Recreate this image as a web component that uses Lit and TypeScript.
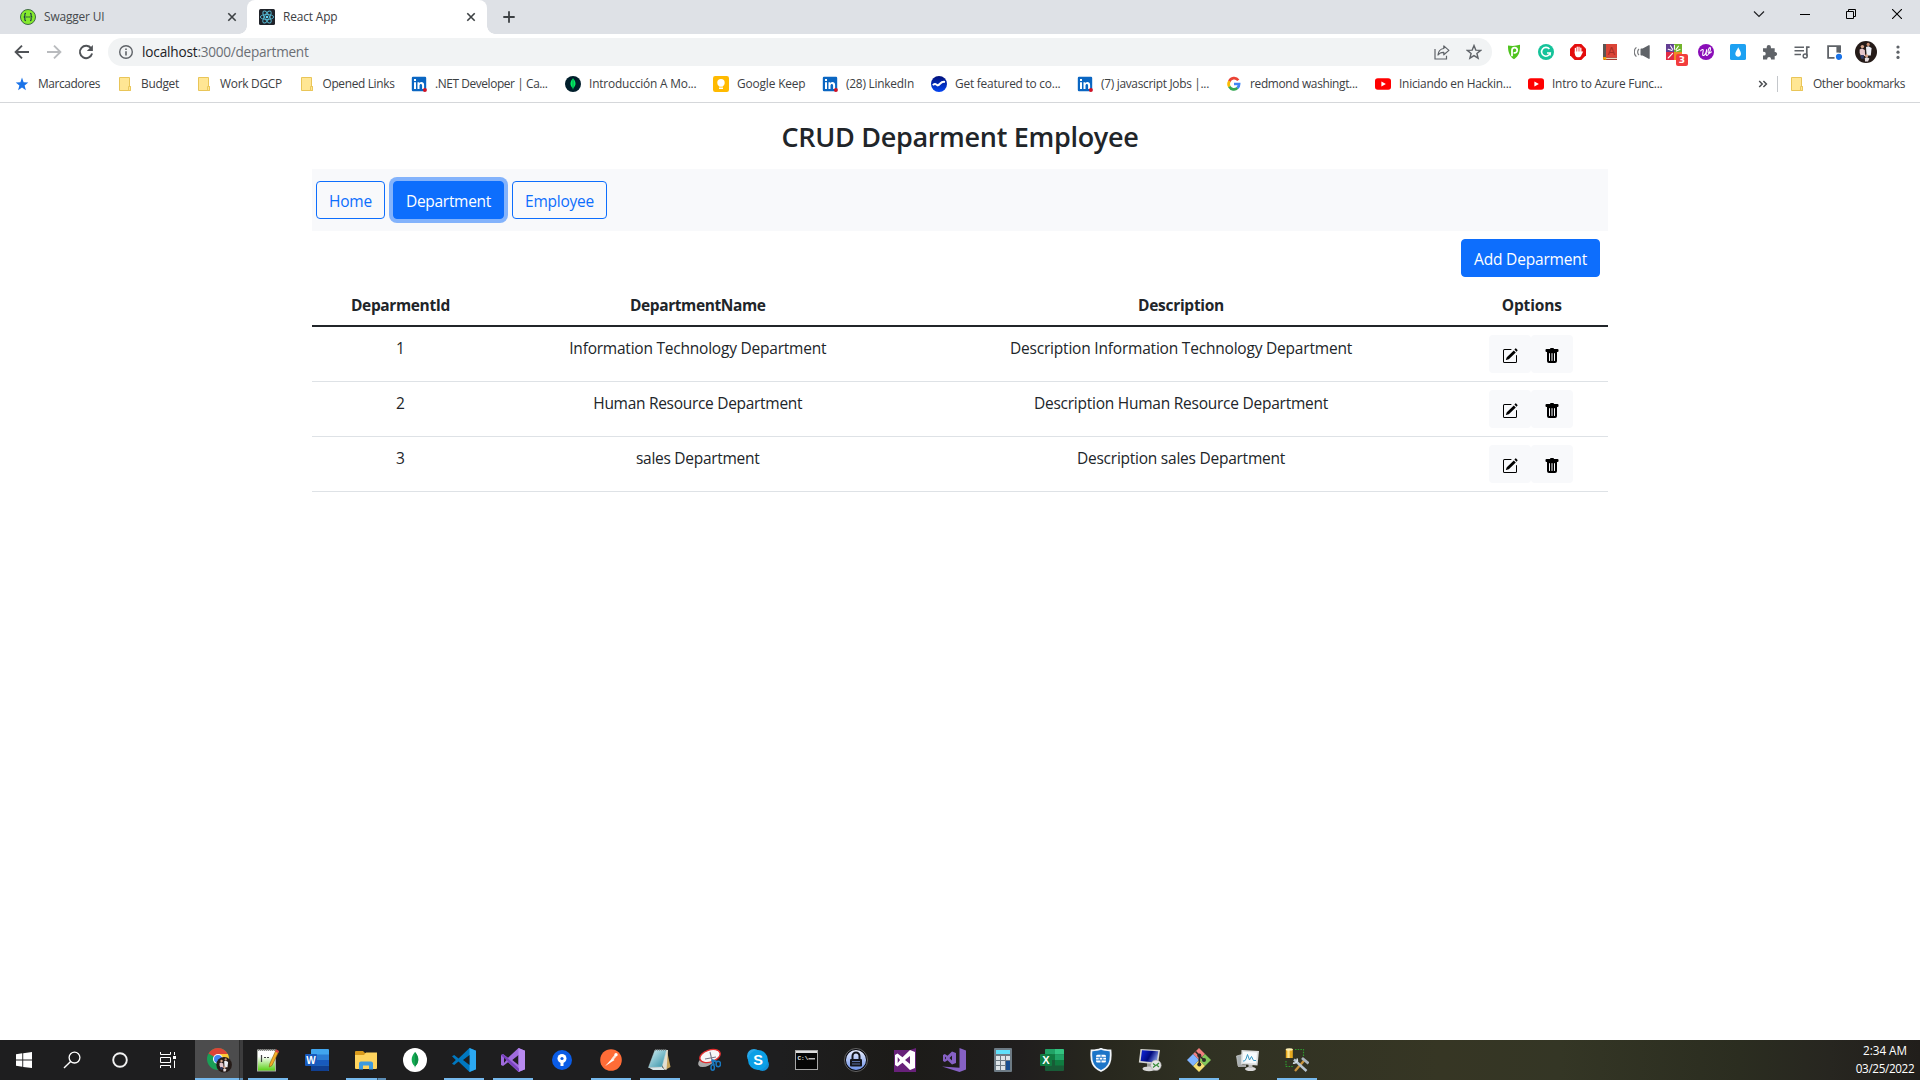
import { LitElement, html, css, svg } from "lit";
import { customElement, property } from "lit/decorators.js";

/** Single line of text whose tracking is adjusted so that it fills a given width. */
@customElement("text-run")
class TextRun extends LitElement {
  static styles = css`
    :host { display: inline-block; white-space: pre; flex: none; }
  `;
  @property() text = "";
  @property({ type: Number }) w = 0;
  render() {
    return html`<span>${this.text}</span>`;
  }
  updated() {
    const s = this.renderRoot.querySelector("span") as HTMLElement;
    s.style.letterSpacing = "0";
    const natural = s.getBoundingClientRect().width;
    const n = this.text.length;
    if (this.w && n) s.style.letterSpacing = ((this.w - natural) / n).toFixed(4) + "px";
    if (this.w) this.style.width = this.w + "px";
  }
}

const icon = (size: number, body: unknown, box = "0 0 16 16") =>
  html`<svg width=${size} height=${size} viewBox=${box}>${body}</svg>`;

const FONT = "Liberation Sans, sans-serif";

/* ---------- browser glyphs ---------- */
const swagger = icon(16, svg`
  <circle cx="8" cy="8" r="7.5" fill="#85ea2d" stroke="#3f6b45" stroke-width="1"/>
  <path d="M6 4.3C4.6 4.3 4.9 5.4 4.9 6.4C4.9 7.4 4.5 8 3.7 8C4.5 8 4.9 8.6 4.9 9.6C4.9 10.6 4.6 11.7 6 11.7M10 4.3C11.4 4.3 11.1 5.4 11.1 6.4C11.1 7.4 11.5 8 12.3 8C11.5 8 11.1 8.6 11.1 9.6C11.1 10.6 11.4 11.7 10 11.7" fill="none" stroke="#173647" stroke-width="1.1"/>
  <circle cx="6.1" cy="8" r=".65" fill="#173647"/><circle cx="8" cy="8" r=".65" fill="#173647"/><circle cx="9.9" cy="8" r=".65" fill="#173647"/>`);
const react = icon(16, svg`
  <rect width="16" height="16" rx="1.5" fill="#20232a"/>
  <g fill="none" stroke="#56b9d2" stroke-width=".9">
    <ellipse cx="8" cy="8" rx="6.7" ry="2.5"/><ellipse cx="8" cy="8" rx="6.7" ry="2.5" transform="rotate(60 8 8)"/><ellipse cx="8" cy="8" rx="6.7" ry="2.5" transform="rotate(120 8 8)"/>
  </g><circle cx="8" cy="8" r="1.3" fill="#61dafb"/>`);
const tabClose = icon(16, svg`<path d="M4.3 4.3L11.7 11.7M11.7 4.3L4.3 11.7" stroke="#3c4043" stroke-width="1.6"/>`);
const plus = icon(16, svg`<path d="M8 2.3V13.7M2.3 8H13.7" stroke="#3c4043" stroke-width="1.8"/>`);
const back = icon(16, svg`<path d="M15 8H2M8 1.6L1.6 8L8 14.4" fill="none" stroke="#505357" stroke-width="1.9"/>`);
const forward = icon(16, svg`<path d="M1 8H14M8 1.6L14.4 8L8 14.4" fill="none" stroke="#b9bbbe" stroke-width="1.9"/>`);
const reload = icon(16, svg`<path d="M13.2 4.4A6.2 6.2 0 1 0 14.1 9.6" fill="none" stroke="#505357" stroke-width="1.9"/><path d="M14.9 .9V7H8.8Z" fill="#505357"/>`);
const info = icon(16, svg`<circle cx="8" cy="8" r="6.3" fill="none" stroke="#5f6368" stroke-width="1.4"/><path d="M8 7.2V11.4M8 4.5V6" stroke="#5f6368" stroke-width="1.6"/>`);
const share = icon(16, svg`<path d="M1 5V15H12.5V11.8" fill="none" stroke="#5f6368" stroke-width="1.2"/><path d="M9.8 1.9L14.9 6.4L9.8 10.8V8.3C7 8.2 5.4 9 4 11C4.3 7.4 6.2 5 9.8 4.5Z" fill="none" stroke="#5f6368" stroke-width="1.2" stroke-linejoin="round"/>`);
const starOutline = icon(16, svg`<path d="M8 1.6L9.8 6.1L14.7 6.4L10.9 9.5L12.1 14.2L8 11.6L3.9 14.2L5.1 9.5L1.3 6.4L6.2 6.1Z" fill="none" stroke="#5f6368" stroke-width="1.4"/>`);
const starBlue = icon(16, svg`<path d="M8 1.6L9.6 6.2L14.3 6.4L10.6 9.4L11.9 14.2L8 11.5L4.1 14.2L5.4 9.4L1.7 6.4L6.4 6.2Z" fill="#1a73e8"/>`);
const folder = icon(16, svg`<path d="M2.5 1.5H12.5V10.5H13.5V14.5H2.5Z" fill="#ffe694" stroke="#e9c558" stroke-width="1"/><path d="M11.5 14.5V10.5H13.5V14.5Z" fill="#ffe694" stroke="#e9c558" stroke-width=".9"/>`);
const linkedin = icon(16, svg`<rect x=".8" y=".8" width="14.4" height="14.4" rx="1.2" fill="#0a66c2"/>
  <path d="M3 6.2H5V13H3ZM3 3H5V5H3ZM6.5 6.2H8.4V7.2C9.5 5.5 13.1 5.6 13.1 9V13H11.1V9.5C11.1 7.4 8.5 7.4 8.5 9.5V13H6.5Z" fill="#fff"/><circle cx="13.9" cy="14" r="2" fill="#d11124"/>`);
const mongo = icon(16, svg`<circle cx="8" cy="8" r="8" fill="#001e2b"/><path d="M8 2.2C11.7 6 11 9.8 8.3 12L8 14L7.7 12C5 9.8 4.4 6 8 2.2Z" fill="#00ed64"/><path d="M8 3V12.5" stroke="#00a34a" stroke-width="1"/>`);
const keep = icon(16, svg`<rect width="16" height="16" rx="2.2" fill="#ffba00"/><circle cx="8" cy="6.8" r="3.7" fill="#fff"/><path d="M6 9H10V10.6H6ZM6 11.6H10V13H6Z" fill="#fff"/>`);
const wave = icon(16, svg`<defs><linearGradient id="w" x2="0" y2="1"><stop stop-color="#000f7a"/><stop offset="1" stop-color="#0546f2"/></linearGradient></defs><circle cx="8" cy="8" r="8" fill="url(#w)"/><path d="M2 9.3C3.4 6.7 5.4 8.5 6.8 9.4C8.8 8.9 9.8 5 14 6" fill="none" stroke="#fff" stroke-width="2"/>`);
const google = icon(16, svg`<g fill="none" stroke-width="2.7"><path d="M12.3 4.2A5.2 5.2 0 0 0 3.3 5.4" stroke="#ea4335"/><path d="M3.4 5.2A5.3 5.3 0 0 0 3.4 10.8" stroke="#fbbc05"/><path d="M3.3 10.6A5.2 5.2 0 0 0 11.5 11.9" stroke="#34a853"/><path d="M8 8H13.1C13.1 9.7 12.5 11 11.4 12" stroke="#4285f4"/></g>`);
const youtube = icon(16, svg`<rect x="0" y="2.2" width="16" height="11.6" rx="2.8" fill="#f00"/><path d="M6.4 5.4L10.9 8L6.4 10.6Z" fill="#fff"/>`);

/* ---------- extension icons ---------- */
const privacy = icon(16, svg`<path d="M2 1.5C6 2.2 10 2 14 .8C14.3 8 12.6 12.6 8 15.2C3.8 12.6 1.8 8 2 1.5Z" fill="#4fc41f"/><path d="M6 12.3V6.3A2.6 2.6 0 1 1 8.6 8.9H7.6" fill="none" stroke="#fff" stroke-width="1.8"/>`);
const grammarly = icon(16, svg`<circle cx="8" cy="8" r="8" fill="#15c39a"/><path d="M11.4 5A4.4 4.4 0 1 0 12.2 9H9" fill="none" stroke="#fff" stroke-width="1.6"/><path d="M12.2 8.7V11.6" stroke="#fff" stroke-width="1.3"/>`);
const adblock = icon(16, svg`<path d="M4.7 0H11.3L16 4.7V11.3L11.3 16H4.7L0 11.3V4.7Z" fill="#e40d0d"/><path d="M5.4 4.4V9M7.2 3.2V8M9 3.2V8M10.8 4.2V9" stroke="#fff" stroke-width="1.3" stroke-linecap="round"/><path d="M4.8 7.4H11.4L13.2 7.5L11.2 11.5C10.5 13 9.7 13.3 8.3 13.3C5.6 13.3 4.8 11 4.8 9Z" fill="#fff"/>`);
const book = icon(16, svg`<path d="M1.5 0H15V13.5H3C1.5 13.5 1 14 1 14.6Z" fill="#db4437"/><path d="M1 1V14.8C1.3 15.6 2 16 3 16H15V13.3H3L1.7 14" fill="#a83a30"/><path d="M1 0H4V13H1Z" fill="#5b5552"/><path d="M3 14H15V15H3Z" fill="#ead9c5"/><path d="M1.2 13.2V16L2.8 15.3L4.2 16V13.2Z" fill="#f4b400"/><text x="9.3" y="11" font-size="11" font-family=${FONT} text-anchor="middle" fill="#a82e25">A</text>`);
const speaker = icon(16, svg`<path d="M7.2 5.2H9L15 1.8V14.2L9 10.8H7.2Z" fill="#5f6368" stroke="#5f6368" stroke-width="1.4" stroke-linejoin="round"/><path d="M5 5A4 4 0 0 0 5 11M2.4 3.4A6 6 0 0 0 2.4 12.6" fill="none" stroke="#77797c" stroke-width="1.2"/>`);
const patch = html`<div class="badged">${icon(16, svg`<rect width="8" height="8" fill="#633f93"/><rect x="8" width="8" height="8" fill="#72b42c"/><rect y="8" width="8" height="8" fill="#e22a45"/><rect x="8" y="8" width="8" height="8" fill="#f08a24"/><path d="M6.6 9.4L2.2 14M6 6.6L2.2 5.2M6.6 5.3L4.5 1.8M8.4 5.2V1.2M10 5.6L12.4 2.2M10.4 7L14 5.6" stroke="#fff" stroke-width="1.1" stroke-linecap="round"/>`)}<span class="badge">3</span></div>`;
const wiki = icon(16, svg`<circle cx="8" cy="8" r="8" fill="#8a0db8"/><path d="M2.4 7.2C3.4 5.4 5.6 4.6 5.2 6.8C4.5 10 4.3 12.2 6 11.4C7.6 10.4 8.4 7.6 8.7 5.4C8.2 8.6 7.6 12 9.2 11.4C11.2 10.2 13.2 5 12.2 3.6C11 3 10 6.6 10 8.2C10.6 10 12.4 9 13.8 7.6" fill="none" stroke="#fff" stroke-width="1.1"/>`);
const drop = icon(16, svg`<rect width="16" height="16" rx="1.6" fill="#1da1f2"/><path d="M8.2 3.2C9.2 5.4 11 7.5 11 9.8C11 13.7 5.3 13.7 5.3 9.8C5.3 7.5 7.5 5.4 8.2 3.2Z" fill="#fff"/>`);
const puzzle = icon(16, svg`<path d="M1 4.2H4.7V3A2.1 2.1 0 0 1 8.9 3V4.2H12.7V8H13.5A2.1 2.1 0 0 1 13.5 12.1H12.7V15.5H9V14.8A1.9 1.9 0 0 0 5.2 14.8V15.5H1V11.5H1.9A1.8 1.8 0 0 0 1.9 7.8H1Z" fill="#5f6368"/>`);
const media = icon(16, svg`<path d="M.5 3.2H10M.5 6.8H10M.5 10.4H7" stroke="#5f6368" stroke-width="1.5"/><path d="M15.6 3.1H12.8V11.8" fill="none" stroke="#5f6368" stroke-width="1.7"/><circle cx="11.2" cy="12" r="2" fill="none" stroke="#5f6368" stroke-width="1.5"/>`);
const panel = icon(16, svg`<path d="M8.5 13.9H2.1V2.1H14V8.6" fill="none" stroke="#5f6368" stroke-width="1.8"/><path d="M10.4 2H14.9V8.6H10.4Z" fill="#5f6368"/><circle cx="13" cy="12.8" r="3.1" fill="#1a73e8"/>`);
const portrait = svg`<circle cx="11" cy="11" r="11" fill="#251b18"/><circle cx="7.4" cy="5.6" r="1.7" fill="#d8a58b"/><circle cx="13.2" cy="3.4" r="1.6" fill="#c98f72"/><path d="M4.6 8.6L7 7.6L9.8 9L10.2 15H6L4.6 12Z" fill="#e5c6cc"/><path d="M11 6L13.5 5.2L16.6 7L15.8 14.5H11.6Z" fill="#eceef5"/><path d="M5.5 14H9L8.5 18L6 17.5Z" fill="#333c66"/><circle cx="11.6" cy="14.8" r="1.6" fill="#d9a288"/><path d="M9.8 17L12 16.2L14.4 17.5L13 20.5H10Z" fill="#e6dce0"/>`;
const avatar = icon(22, portrait, "0 0 22 22");
const dots = icon(16, svg`<circle cx="8" cy="3" r="1.6" fill="#5f6368"/><circle cx="8" cy="8.2" r="1.6" fill="#5f6368"/><circle cx="8" cy="13.4" r="1.6" fill="#5f6368"/>`);

/* ---------- window controls ---------- */
const winDown = icon(12, svg`<path d="M1 3.5L6 8.5L11 3.5" fill="none" stroke="#202124" stroke-width="1.2"/>`, "0 0 12 12");
const winMin = icon(10, svg`<path d="M0 5.5H10" stroke="#000"/>`, "0 0 10 10");
const winMax = icon(10, svg`<path d="M.5 2.5H7.5V9.5H.5ZM2.5 2.5V.5H9.5V7.5H7.5" fill="none" stroke="#000"/>`, "0 0 10 10");
const winClose = icon(10, svg`<path d="M0 0L10 10M10 0L0 10" stroke="#000" stroke-width="1.1"/>`, "0 0 10 10");

/* ---------- page icons ---------- */
const pencil = icon(16, svg`<path d="M15.5 1.9a.5.5 0 0 1 0 .7l-1 1.1-2.1-2.1 1-1.1a.5.5 0 0 1 .7 0zM13.8 4.4l-2-2-7 6.8a.5.5 0 0 0-.1.2l-.8 2.4a.25.25 0 0 0 .3.3l2.4-.8a.5.5 0 0 0 .2-.1z"/><path fill-rule="evenodd" d="M1 13.5A1.5 1.5 0 0 0 2.5 15h11a1.5 1.5 0 0 0 1.5-1.5v-6a.5.5 0 0 0-1 0v6a.5.5 0 0 1-.5.5h-11a.5.5 0 0 1-.5-.5v-11a.5.5 0 0 1 .5-.5H9a.5.5 0 0 0 0-1H2.5A1.5 1.5 0 0 0 1 2.5z"/>`);
const trash = icon(16, svg`<path d="M2.5 1a1 1 0 0 0-1 1v1a1 1 0 0 0 1 1H3v9a2 2 0 0 0 2 2h6a2 2 0 0 0 2-2V4h.5a1 1 0 0 0 1-1V2a1 1 0 0 0-1-1H10a1 1 0 0 0-1-1H7a1 1 0 0 0-1 1zm3 4a.5.5 0 0 1 .5.5v7a.5.5 0 0 1-1 0v-7a.5.5 0 0 1 .5-.5zM8 5a.5.5 0 0 1 .5.5v7a.5.5 0 0 1-1 0v-7A.5.5 0 0 1 8 5zm3 .5v7a.5.5 0 0 1-1 0v-7a.5.5 0 0 1 1 0z"/>`);

/* ---------- taskbar icons, drawn on a 24px grid ---------- */
const t = (body: unknown) => icon(24, body, "0 0 24 24");
const windows = t(svg`<path d="M4 6.3L10.3 5.3V11.6H4ZM11.2 5.2L20 4V11.6H11.2ZM4 12.4H10.3V18.8L4 17.8ZM11.2 12.4H20V20L11.2 18.9Z" fill="#fff"/>`);
const search = t(svg`<circle cx="14.5" cy="9.6" r="5.4" fill="none" stroke="#fff" stroke-width="1.3"/><path d="M10.6 13.5L4 20" stroke="#fff" stroke-width="1.4"/>`);
const cortana = t(svg`<circle cx="12" cy="12" r="6.8" fill="none" stroke="#f2f2f2" stroke-width="1.9"/>`);
const taskview = t(svg`<path d="M4.5 4V6.5H14.5V4M4.5 20V17.5H14.5V20M4.5 9.5H14.5V14.5H4.5ZM18.5 4V7M18.5 12.5V20" fill="none" stroke="#fff"/><rect x="17" y="8" width="3" height="3" fill="#fff"/>`);
const chrome = icon(26, svg`<circle cx="12" cy="12" r="11" fill="#1a9f56"/><path d="M12 12L2.5 6.5A11 11 0 0 1 21.5 6.5L22 8H12Z" fill="#dd4437"/><path d="M12 7H21.9A11 11 0 0 1 12 23L16.5 14.5Z" fill="#fdc935"/><circle cx="12" cy="12" r="5" fill="#fff"/><circle cx="12" cy="12" r="4" fill="#4285f4"/><g transform="translate(10.3 10) scale(.71)">${portrait}</g>`, "0 0 26 26");
const npp = t(svg`<defs><linearGradient id="np" x2="0" y2="1"><stop offset=".3" stop-color="#fff"/><stop offset="1" stop-color="#55cf0f"/></linearGradient></defs><rect x="1.5" y="2" width="18" height="21" fill="url(#np)" stroke="#a8aba4"/><path d="M2 2H19" stroke="#888" stroke-dasharray="1 1" stroke-width="2"/><path d="M5.5 7V14M8 9.5H10M11 9.5H13" stroke="#444" stroke-width="1.2"/><path d="M20 2L22.7 3.7L16 17.5L13.3 19L13.7 16Z" fill="#f3ad26" stroke="#8a5a10" stroke-width=".6"/><path d="M20.2 1.2L23 3L22 5L19.3 3.4Z" fill="#d44"/>`);
const word = t(svg`<rect x="6" y="1" width="18" height="22" rx="1" fill="#41a5ee"/><path d="M6 6.5H24V12H6Z" fill="#2b7cd3"/><path d="M6 12H24V17.5H6Z" fill="#185abd"/><path d="M6 17.5H24V22A1 1 0 0 1 23 23H6Z" fill="#103f91"/><rect y="6" width="12" height="12" rx="1" fill="#185abd"/><text x="6" y="15.7" font-size="10" font-weight="700" font-family=${FONT} text-anchor="middle" fill="#fff">W</text>`);
const explorer = t(svg`<path d="M1 4A1 1 0 0 1 2 3H9L11 5H23V20H1Z" fill="#d99a1b"/><path d="M1 7H10L12 4.5H23V20A1 1 0 0 1 22 21H2A1 1 0 0 1 1 20Z" fill="#ffd45e"/><path d="M5 21.5V15A2 2 0 0 1 7 13.5H17A2 2 0 0 1 19 15V21.5H15V17.5H9V21.5Z" fill="#3e9ae0"/>`);
const compass = t(svg`<circle cx="12" cy="12" r="12" fill="#fff"/><path d="M12 4C16.7 9 16 15 12.4 18L12 20L11.6 18C8 15 7.3 9 12 4Z" fill="#13aa52"/><path d="M12 4C16.7 9 16 15 12 18.5Z" fill="#0e8f45"/>`);
const vscode = t(svg`<path d="M17.5 0L24 2.7V21.3L17.5 24L6.5 13.5L2.2 17L0 15.8L3.8 12L0 8.2L2.2 7L6.5 10.5Z" fill="#0078c0"/><path d="M17.5 0L24 2.7V21.3L17.5 24Z" fill="#2ba8f2"/><path d="M17.5 7V17L11 12Z" fill="#1e1e1e"/>`);
const vs = t(svg`<path d="M17.5 0L24 2.8V21.2L17.5 24L7 14.2L2 18L0 17V7L2 6L7 9.8ZM3 9V15L5.5 12ZM17.5 7L11.3 12L17.5 17Z" fill="#9f6bdd" fill-rule="evenodd"/><path d="M17.5 0L24 2.8V21.2L17.5 24Z" fill="#b88af0"/><path d="M2 6L18 20.5V24L0 7.2Z" fill="#7038b8" opacity=".8"/>`);
const sourcetree = t(svg`<circle cx="12" cy="12" r="10" fill="#0a5ce6"/><circle cx="12" cy="10.5" r="4.5" fill="#fff"/><circle cx="12" cy="10.5" r="1.6" fill="#0a5ce6"/><rect x="10.5" y="13" width="3" height="5" fill="#fff"/>`);
const postman = t(svg`<circle cx="12" cy="12" r="10.8" fill="#ff6c37"/><path d="M6 18.2L13.5 10L15.5 12Z" fill="#fff"/><path d="M12.5 10.5L15.5 7L17.2 8.8L14 12.3Z" fill="#ffe5da"/><circle cx="17" cy="6.8" r="1.7" fill="#fff"/>`);
const notepad = t(svg`<defs><linearGradient id="nt" x2="1" y2="1"><stop stop-color="#d4f0f4"/><stop offset="1" stop-color="#2c8ca3"/></linearGradient></defs><path d="M19 3L22.5 19L17 22Z" fill="#c6a35a"/><path d="M7 2H20L18.5 22L16 21Z" fill="#e4dfd0"/><path d="M7 2H18.5L14 19L.5 19.5Z" fill="url(#nt)" stroke="#b9d6db" stroke-width=".5"/><path d="M.5 19.5L14 19L17 22L5 22Z" fill="#d9e6e8"/><path d="M7 1.8H19" stroke="#666" stroke-width="1.6" stroke-dasharray="1 1"/>`);
const snip = t(svg`<ellipse cx="9.5" cy="13" rx="9" ry="5" transform="rotate(-28 9.5 13)" fill="#aaa"/><ellipse cx="13" cy="8" rx="10.5" ry="6" transform="rotate(-18 13 8)" fill="#f7f7f7" stroke="#e22f2f" stroke-width="1.4"/><path d="M13 4L15.5 14.5M8 11L19 9" stroke="#778" stroke-width="1.1"/><path d="M15 12L17 17M15 12L20 14" stroke="#1979c0" stroke-width="2"/><ellipse cx="15.7" cy="19.5" rx="1.7" ry="2.8" fill="none" stroke="#1979c0" stroke-width="1.5"/><ellipse cx="21.3" cy="16" rx="2.2" ry="2.8" fill="none" stroke="#1979c0" stroke-width="1.5"/>`);
const skype = t(svg`<circle cx="8" cy="8" r="7" fill="#28a8ea"/><circle cx="16.5" cy="16.5" r="6.5" fill="#1190d8"/><circle cx="12" cy="12" r="10" fill="#0a9fe6"/><text x="12" y="17" font-size="14.5" font-weight="700" font-family=${FONT} text-anchor="middle" fill="#fff">S</text>`);
const cmd = t(svg`<rect x=".5" y="2.5" width="22" height="19" fill="#050505" stroke="#a6a6a6"/><path d="M1 4H22" stroke="#dedede" stroke-width="2"/><text x="2.5" y="11.5" font-size="6" font-weight="700" font-family="Liberation Mono, monospace" fill="#eee">C:\\</text><path d="M13.5 10.8H20" stroke="#eee" stroke-width="1.2"/>`);
const keepass = t(svg`<defs><linearGradient id="kp" x2="0" y2="1"><stop stop-color="#eef2ff"/><stop offset="1" stop-color="#6a8fe8"/></linearGradient></defs><circle cx="12" cy="12" r="10.7" fill="url(#kp)" stroke="#08090d" stroke-width="1.3"/><circle cx="12" cy="12" r="11.5" fill="none" stroke="#999" stroke-width=".6"/><path d="M8.5 11V8A3.5 3.5 0 0 1 15.5 8V11" fill="none" stroke="#14161c" stroke-width="2"/><rect x="6" y="11" width="12" height="7.5" rx="1" fill="#14161c"/><path d="M8 13.5H16M8 16H16" stroke="#6c86c8" stroke-width=".8"/>`);
const vsOld = t(svg`<path d="M1 2H17L23 0V24H1Z" fill="#68217a"/><path d="M17 2L22 4V20L17 22L9.5 14.8L4.5 18.5L2 17V7L4.5 5.5L9.5 9.2ZM4.7 9V15L7 12ZM17 8L12 12L17 16Z" fill="#fff" fill-rule="evenodd"/>`);
const vsMini = t(svg`<path d="M17.5 0L24 2.5V21.5L17.5 24L0 18.6L17.5 19.8Z" fill="#8661c5"/><path d="M10 3.5L14 5V15L10 16.5L5.5 12.2L2.8 14L1 13V7L2.8 6L5.5 7.8ZM3 8.5V11.5L4.2 10ZM10 7.5L7.5 10L10 12.5Z" fill="#8661c5" fill-rule="evenodd"/>`);
const calc = t(svg`<rect x="3" y="0" width="18" height="24" rx="1" fill="#6d7a84"/><rect x="5" y="2" width="14" height="4" fill="#5fe0fa"/><path d="M5 8H9V12H5ZM10 8H14V12H10ZM15 8H19V12H15ZM5 13H9V17H5ZM10 13H14V17H10ZM5 18H9V22H5ZM10 18H14V22H10Z" fill="#dde4e8"/><rect x="15" y="13" width="4" height="9" fill="#174e90"/>`);
const excel = t(svg`<rect x="5" y="1" width="19" height="22" rx="1" fill="#185c37"/><path d="M5 2A1 1 0 0 1 6 1H15V6.5H5Z" fill="#21a366"/><path d="M15 1H23A1 1 0 0 1 24 2V6.5H15Z" fill="#33c481"/><path d="M5 6.5H15V12H5Z" fill="#107c41"/><path d="M15 6.5H24V12H15Z" fill="#21a366"/><path d="M15 12H24V17.5H15Z" fill="#107c41"/><rect y="6" width="12" height="12" rx="1" fill="#107c41"/><text x="6" y="16" font-size="11" font-weight="700" font-family=${FONT} text-anchor="middle" fill="#fff">X</text>`);
const forti = t(svg`<path d="M2.5 2.5C9 2.3 10 1.7 12 .7C14 1.7 15 2.3 21.5 2.5C22.5 13 20.5 19.5 12 23C3.5 19.5 1.5 13 2.5 2.5Z" fill="#1c75c8" stroke="#f1f5f9" stroke-width="1.8"/><rect x="7" y="6.8" width="10" height="7.8" rx="1.5" fill="#fff"/><path d="M6.5 9.3H17.5M6.5 12H17.5" stroke="#1c75c8" stroke-width=".9"/><path d="M12 6.5V9M12 12V15M10.2 9.5V12M13.8 9.5V12" stroke="#1c75c8" stroke-width=".9"/>`);
const rdp = t(svg`<defs><linearGradient id="rd" x2="1" y2=".4"><stop offset=".2" stop-color="#0b1fc4"/><stop offset=".6" stop-color="#000a7d"/><stop offset="1" stop-color="#7186d9"/></linearGradient></defs><path d="M9 15H15V20H9Z" fill="#999"/><ellipse cx="11" cy="20.8" rx="6.5" ry="2.4" fill="#d8d8d8"/><path d="M2.5 1L22 2L20 16.5L.8 14.5Z" fill="#d5d5d0"/><path d="M4 2.3L20.3 3.3L18.6 14.8L2.6 13Z" fill="url(#rd)"/><circle cx="18" cy="17.3" r="5.2" fill="#e6e6e6" stroke="#aaa" stroke-width=".6"/><path d="M15 15.5L17.5 17.5L15 19.5M21 15L18.6 17L21 19" fill="none" stroke="#358c38" stroke-width="1.2"/>`);
const git = t(svg`<path d="M12 0L18 6L12 12L6 6Z" fill="#f07e7e"/><path d="M18 6L24 12L18 18L12 12Z" fill="#82c75b"/><path d="M12 12L18 18L12 24L6 18Z" fill="#f5df73"/><path d="M6 6L12 12L6 18L0 12Z" fill="#80b3ff"/><path d="M8.5 3.5L12.3 7.5V17M12.3 7.5L17 12" fill="none" stroke="#2b2a27" stroke-width="1.6"/><circle cx="12.3" cy="7.5" r="2" fill="#2b2a27"/><circle cx="12.3" cy="16.5" r="2" fill="#2b2a27"/><circle cx="17" cy="12" r="2" fill="#2b2a27"/>`);
const monitor = t(svg`<path d="M.5 8L6 6.5V17L2 18Z" fill="#a9b0b2" stroke="#ddd" stroke-width=".6"/><path d="M2 16.5H10V19H2Z" fill="#aaa"/><ellipse cx="14.5" cy="20.9" rx="5.5" ry="2.1" fill="#d9d9d9"/><path d="M12.5 16H16.5V20H12.5Z" fill="#bbb"/><path d="M5.5 2L23 3L21.5 17.5L5 16Z" fill="#dcdede"/><path d="M7 3.8L21 4.6L20 15.6L6.4 14.4Z" fill="#f7fbfd"/><path d="M7 13H8.5L10 11L11.5 6.5L13.5 12L15.5 8.5L17.5 12.5H20" fill="none" stroke="#3598c5" stroke-width="1"/>`);
const tools = t(svg`<path d="M10 1.5H18.5V9M1 13V18.5H9" fill="none" stroke="#2e9a2e" stroke-width="1.2" stroke-dasharray="1.5 1.2"/><rect x=".8" y="1" width="7" height="9" fill="#e8a91e"/><rect x="2.3" y="1" width="2.4" height="9" fill="#fbe289"/><ellipse cx="4.3" cy="1.4" rx="3.5" ry="1.2" fill="#fff1b5"/><path d="M10 23L20 11.5" stroke="#c9933c" stroke-width="2.3"/><path d="M17 10L23.5 15.5" stroke="#aab4bd" stroke-width="2.8"/><path d="M9 11.5L21.5 23" stroke="#b9c6d2" stroke-width="2.4"/><path d="M8 15A3.3 3.3 0 0 0 12 10.5" fill="none" stroke="#d4dee6" stroke-width="1.7"/>`);

const bookmarks: [unknown, string, number, number][] = [
  [starBlue, "Marcadores", 62, 103], [folder, "Budget", 38, 79], [folder, "Work DGCP", 62, 102.5],
  [folder, "Opened Links", 72, 112.5], [linkedin, ".NET Developer | Ca...", 112.5, 154],
  [mongo, "Introducción A Mo...", 107.5, 148], [keep, "Google Keep", 68.5, 109],
  [linkedin, "(28) LinkedIn", 68, 109], [wave, "Get featured to co...", 105.5, 146],
  [linkedin, "(7) javascript Jobs |...", 108, 149], [google, "redmond washingt...", 107.5, 149],
  [youtube, "Iniciando en Hackin...", 112.5, 153], [youtube, "Intro to Azure Func...", 110.5, 150],
];

const extensions = [privacy, grammarly, adblock, book, speaker, patch, wiki, drop, puzzle, media, panel, avatar, dots];

const rows: [string, string, number, string, number][] = [
  ["1", "Information Technology Department", 257, "Description Information Technology Department", 342],
  ["2", "Human Resource Department", 209, "Description Human Resource Department", 294],
  ["3", "sales Department", 123.5, "Description sales Department", 208],
];

const apps: [unknown, string][] = [
  [chrome, "active"], [npp, "open"], [word, ""], [explorer, "multi"], [compass, ""], [vscode, "open"],
  [vs, "open"], [sourcetree, ""], [postman, "open"], [notepad, "open"], [snip, ""], [skype, ""], [cmd, ""],
  [keepass, ""], [vsOld, ""], [vsMini, ""], [calc, ""], [excel, ""], [forti, ""], [rdp, ""], [git, "open"],
  [monitor, ""], [tools, "open"],
];

@customElement("app-root")
class AppRoot extends LitElement {
  static styles = css`
    :host {
      display: flex; flex-direction: column; width: 1920px; height: 1080px; overflow: hidden;
      background: #fff; color: #212529; font-family: "Open Sans", "Noto Sans", sans-serif;
    }
    * { box-sizing: border-box; }
    svg { display: block; flex: none; }

    .tabs { height: 34px; flex: none; background: #dee1e6; display: flex; align-items: stretch; font-size: 11.9px; color: #45494d; }
    .tab { display: flex; align-items: center; padding-left: 20px; width: 247px; }
    .tab text-run { margin-left: 8px; padding-bottom: 2px; }
    .tab .x { margin-left: auto; margin-right: 7px; }
    .tab.on { width: 240px; padding-left: 12px; background: #fff; border-radius: 8px 8px 0 0; color: #3c4043; position: relative; }
    .tab.on .x { margin-right: 8px; }
    .tab.on::before, .tab.on::after { content: ""; position: absolute; bottom: 0; width: 8px; height: 8px; }
    .tab.on::before { left: -8px; background: radial-gradient(circle at 0 0, transparent 7.5px, #fff 8px); }
    .tab.on::after { right: -8px; background: radial-gradient(circle at 100% 0, transparent 7.5px, #fff 8px); }
    .new { display: flex; align-items: center; margin-left: 14px; }
    .win { margin-left: auto; display: flex; height: 28px; }
    .win div { width: 46px; display: flex; align-items: center; justify-content: center; }

    .toolbar { height: 32px; flex: none; display: flex; align-items: center; padding: 4px 6px 0 6px; }
    .nav { display: flex; width: 102px; flex: none; }
    .nav div { width: 32px; display: flex; justify-content: center; }
    .omni { height: 28px; width: 1384px; border-radius: 14px; background: #f1f3f4; display: flex; align-items: center; padding: 0 10px; margin-right: 6px; font-size: 13.6px; }
    .omni .url { display: flex; margin-left: 8px; color: #202124; padding-bottom: 1px; }
    .omni .path { color: #6b6f74; }
    .omni .tail { margin-left: auto; display: flex; gap: 16px; }
    .ext { width: 32px; display: flex; justify-content: center; flex: none; }
    .badged { position: relative; }
    .badge { position: absolute; left: 10px; top: 10px; width: 12px; height: 12px; border-radius: 2px; background: #f23d3d; color: #fff; font: 700 9px/12px "DejaVu Sans", sans-serif; text-align: center; }

    .marks { height: 37px; flex: none; display: flex; align-items: center; padding: 0 15px 0 14px; border-bottom: 1px solid #d5d7da; font-size: 11.9px; color: #3c4043; }
    .mark { display: flex; gap: 8px; align-items: center; flex: none; }
    .mark text-run { padding-bottom: 2px; }
    .more { margin-left: auto; display: flex; align-items: center; }
    .more .sep { width: 1px; height: 16px; background: #c4c7cb; margin: 0 11px 0 9px; }

    .page { flex: 1; width: 1296px; margin: 0 auto; font-size: 15.5px; line-height: 24px; }
    .title { text-align: center; font-size: 27px; font-weight: 600; line-height: 34px; height: 66px; padding-top: 17px; }
    .bar { height: 62px; background: #f8f9fb; display: flex; align-items: center; padding-left: 4px; gap: 8px; }
    .btn { height: 38px; border: 1px solid #0d6efd; border-radius: 4px; color: #0d6efd; display: flex; align-items: center; padding: 1px 12px 0; }
    .btn.fill { background: #0d6efd; color: #fff; }
    .btn.ring { box-shadow: 0 0 0 4px rgba(13, 110, 253, .5); }
    .add { display: flex; justify-content: flex-end; padding: 8px; }
    .row { display: grid; grid-template-columns: 177px 417.5px 549px 152.5px; text-align: center; padding: 9px 0 0; height: 55px; border-bottom: 1px solid #dee2e6; }
    .row.head { height: 42px; padding-top: 8px; font-weight: 700; border-bottom: 2px solid #212529; }
    .acts { display: flex; padding-left: 33.5px; margin-top: -1px; }
    .act { width: 42px; height: 38px; border-radius: 4px; background: #f8f9fb; display: flex; align-items: center; justify-content: center; padding-top: 4px; fill: #000; }

    .task { height: 40px; flex: none; display: flex; color: #fff; background: linear-gradient(90deg, #1e1e1f 0, #1e1e1f 780px, #1c1b18 900px, #201e1e 1020px, #28281e 1110px, #303123 1200px, #363624 1440px, #343625 1560px, #2b2d20 1740px, #272620 1830px, #211e1b 1920px); }
    .sys { width: 48px; display: flex; align-items: center; justify-content: center; }
    .app { width: 49px; height: 40px; display: flex; align-items: center; justify-content: center; background: no-repeat bottom left; }
    .app.first { margin-left: 2.5px; }
    .app.open { background-image: linear-gradient(#76b9ed, #76b9ed); background-size: 40px 2px; background-position: 4.5px 38px; }
    .app.multi { background-image: linear-gradient(90deg, #76b9ed 31px, #33546d 31px, #33546d 32px, #5b8db5 32px); background-size: 40px 2px; background-position: 4.5px 38px; }
    .app.active { background-image: linear-gradient(90deg, #76b9ed 44px, #33546d 44px, #33546d 45px, #5b8db5 45px), linear-gradient(90deg, #4c4c4d 44px, #2c2c2c 44px, #2c2c2c 45px, #3c3c3d 45px); background-size: 48px 2px, 48px 38px; background-position: .5px 38px, .5px 0; }
    .clock { margin-left: auto; width: 60px; margin-right: 5px; display: flex; flex-direction: column; align-items: center; font-size: 11.7px; line-height: 18px; padding-top: 1px; }
  `;

  render() {
    return html`
      <div class="tabs">
        <div class="tab">${swagger}<text-run text="Swagger UI" w="60.5"></text-run><span class="x">${tabClose}</span></div>
        <div class="tab on">${react}<text-run text="React App" w="54.5"></text-run><span class="x">${tabClose}</span></div>
        <div class="new">${plus}</div>
        <div class="win"><div>${winDown}</div><div>${winMin}</div><div>${winMax}</div><div>${winClose}</div></div>
      </div>
      <div class="toolbar">
        <div class="nav"><div>${back}</div><div>${forward}</div><div>${reload}</div></div>
        <div class="omni">
          ${info}
          <div class="url"><text-run text="localhost" w="55.5"></text-run><text-run class="path" text=":3000/department" w="111"></text-run></div>
          <div class="tail">${share}${starOutline}</div>
        </div>
        ${extensions.map((e) => html`<div class="ext">${e}</div>`)}
      </div>
      <div class="marks">
        ${bookmarks.map(([i, label, w, slot]) => html`<div class="mark" style="width:${slot}px">${i}<text-run text=${label} w=${w}></text-run></div>`)}
        <div class="more">
          ${icon(10, svg`<path d="M1.2 2L4.2 5L1.2 8M5.4 2L8.4 5L5.4 8" fill="none" stroke="#4a4d51" stroke-width="1.5"/>`, "0 0 10 10")}
          <div class="sep"></div>
          <div class="mark">${folder}<text-run text="Other bookmarks" w="92"></text-run></div>
        </div>
      </div>
      <div class="page">
        <div class="title"><text-run text="CRUD Deparment Employee" w="357"></text-run></div>
        <div class="bar">
          <div class="btn"><text-run text="Home" w="43"></text-run></div>
          <div class="btn fill ring"><text-run text="Department" w="85"></text-run></div>
          <div class="btn"><text-run text="Employee" w="69"></text-run></div>
        </div>
        <div class="add"><div class="btn fill"><text-run text="Add Deparment" w="113"></text-run></div></div>
        <div class="row head">
          <div><text-run text="DeparmentId" w="99"></text-run></div>
          <div><text-run text="DepartmentName" w="135.5"></text-run></div>
          <div><text-run text="Description" w="86"></text-run></div>
          <div><text-run text="Options" w="60"></text-run></div>
        </div>
        ${rows.map(([id, name, nw, desc, dw]) => html`
          <div class="row">
            <div>${id}</div>
            <div><text-run text=${name} w=${nw}></text-run></div>
            <div><text-run text=${desc} w=${dw}></text-run></div>
            <div class="acts"><div class="act">${pencil}</div><div class="act">${trash}</div></div>
          </div>`)}
      </div>
      <div class="task">
        ${[windows, search, cortana, taskview].map((i) => html`<div class="sys">${i}</div>`)}
        ${apps.map(([i, state], n) => html`<div class="app ${state} ${n === 0 ? "first" : ""}">${i}</div>`)}
        <div class="clock"><text-run text="2:34 AM" w="44"></text-run><text-run text="03/25/2022" w="58.5"></text-run></div>
      </div>
    `;
  }
}
